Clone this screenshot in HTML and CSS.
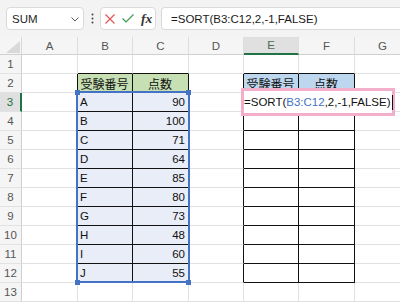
FILE: index.html
```html
<!DOCTYPE html>
<html lang="ja">
<head>
<meta charset="utf-8">
<link rel="stylesheet" href="styles.css">
</head>
<body>
<div class="app">
  <div class="toolbar">
    <div class="namebox">
      <span>SUM</span>
      <svg class="chev" width="8" height="5" viewBox="0 0 8 5"><path d="M0.5 0.5 L4 4 L7.5 0.5" fill="none" stroke="#555" stroke-width="1"/></svg>
    </div>
    <div class="dots">
      <svg width="3" height="11" viewBox="0 0 3 11"><circle cx="1.5" cy="1.5" r="1" fill="#444"/><circle cx="1.5" cy="5.5" r="1" fill="#444"/><circle cx="1.5" cy="9.5" r="1" fill="#444"/></svg>
    </div>
    <div class="fxbox">
      <svg class="ic-x" width="10" height="10" viewBox="0 0 10 10"><path d="M0.5 0.5 L9.5 9.5 M9.5 0.5 L0.5 9.5" stroke="#e0555a" stroke-width="1.2" fill="none"/></svg>
      <svg class="ic-ok" width="12" height="9" viewBox="0 0 12 9"><path d="M0.5 4.5 L4 8 L11.5 0.5" stroke="#3a9a55" stroke-width="1.2" fill="none"/></svg>
      <span class="fx">fx</span>
    </div>
    <div class="formula">=SORT(B3:C12,2,-1,FALSE)</div>
  </div>

  <div class="sheet">
    <div class="grid">
      <!-- header -->
      <div class="corner"></div>
      <div class="ch">A</div><div class="ch">B</div><div class="ch">C</div><div class="ch">D</div><div class="ch sel">E</div><div class="ch">F</div><div class="ch">G</div>
      <!-- row 1 -->
      <div class="rh">1</div>
      <div class="c"></div><div class="c bb"></div><div class="c bb"></div><div class="c"></div><div class="c bb"></div><div class="c bb"></div><div class="c"></div>
      <!-- row 2 -->
      <div class="rh">2</div>
      <div class="c rb"></div><div class="c g rb bb ctr">受験番号</div><div class="c g rb bb ctr">点数</div><div class="c rb"></div><div class="c bl rb bb ctr">受験番号</div><div class="c bl rb bb ctr">点数</div><div class="c"></div>
      <!-- row 3 -->
      <div class="rh sel">3</div>
      <div class="c rb"></div><div class="c d rb bb">A</div><div class="c d rb bb num">90</div><div class="c rb"></div><div class="c rb bb"></div><div class="c rb bb"></div><div class="c"></div>
      <!-- row 4 -->
      <div class="rh">4</div>
      <div class="c rb"></div><div class="c d rb bb">B</div><div class="c d rb bb num">100</div><div class="c rb"></div><div class="c rb bb"></div><div class="c rb bb"></div><div class="c"></div>
      <!-- row 5 -->
      <div class="rh">5</div>
      <div class="c rb"></div><div class="c d rb bb">C</div><div class="c d rb bb num">71</div><div class="c rb"></div><div class="c rb bb"></div><div class="c rb bb"></div><div class="c"></div>
      <!-- row 6 -->
      <div class="rh">6</div>
      <div class="c rb"></div><div class="c d rb bb">D</div><div class="c d rb bb num">64</div><div class="c rb"></div><div class="c rb bb"></div><div class="c rb bb"></div><div class="c"></div>
      <!-- row 7 -->
      <div class="rh">7</div>
      <div class="c rb"></div><div class="c d rb bb">E</div><div class="c d rb bb num">85</div><div class="c rb"></div><div class="c rb bb"></div><div class="c rb bb"></div><div class="c"></div>
      <!-- row 8 -->
      <div class="rh">8</div>
      <div class="c rb"></div><div class="c d rb bb">F</div><div class="c d rb bb num">80</div><div class="c rb"></div><div class="c rb bb"></div><div class="c rb bb"></div><div class="c"></div>
      <!-- row 9 -->
      <div class="rh">9</div>
      <div class="c rb"></div><div class="c d rb bb">G</div><div class="c d rb bb num">73</div><div class="c rb"></div><div class="c rb bb"></div><div class="c rb bb"></div><div class="c"></div>
      <!-- row 10 -->
      <div class="rh">10</div>
      <div class="c rb"></div><div class="c d rb bb">H</div><div class="c d rb bb num">48</div><div class="c rb"></div><div class="c rb bb"></div><div class="c rb bb"></div><div class="c"></div>
      <!-- row 11 -->
      <div class="rh">11</div>
      <div class="c rb"></div><div class="c d rb bb">I</div><div class="c d rb bb num">60</div><div class="c rb"></div><div class="c rb bb"></div><div class="c rb bb"></div><div class="c"></div>
      <!-- row 12 -->
      <div class="rh">12</div>
      <div class="c rb"></div><div class="c d rb bb">J</div><div class="c d rb bb num">55</div><div class="c rb"></div><div class="c rb bb"></div><div class="c rb bb"></div><div class="c"></div>
      <!-- row 13 -->
      <div class="rh">13</div>
      <div class="c"></div><div class="c"></div><div class="c"></div><div class="c"></div><div class="c"></div><div class="c"></div><div class="c"></div>
    </div>

    <div class="refbox"></div>
    <div class="handle h-tl"></div>
    <div class="handle h-tr"></div>
    <div class="handle h-bl"></div>
    <div class="handle h-br"></div>

    <div class="editor"><span>=SORT(</span><span class="ref">B3:C12</span><span>,2,-1,FALSE)</span><span class="caret"></span></div>
  </div>
</div>
</body>
</html>
```
FILE: styles.css
```css
body {
  margin: 0;
  background: #fff;
}

.app {
  width: 400px;
  height: 303px;
  overflow: hidden;
  position: relative;
  background: #fff;
  font-family: "Liberation Sans", Arial, "Noto Sans CJK JP", sans-serif;
}

/* ---------- formula toolbar ---------- */
.toolbar {
  height: 37px;
  box-sizing: border-box;
  display: flex;
  align-items: center;
  padding-left: 6px;
  background: #f3f3f3;
}

.namebox {
  width: 78px;
  height: 23px;
  box-sizing: border-box;
  background: #fff;
  border: 1px solid #dadada;
  border-radius: 4px;
  display: flex;
  align-items: center;
  justify-content: space-between;
  padding: 0 4px 0 5px;
  font-size: 11.5px;
  color: #262626;
}

.chev {
  margin-top: 1px;
}

.dots {
  width: 16px;
  display: flex;
  justify-content: center;
}

.fxbox {
  width: 56px;
  height: 23px;
  box-sizing: border-box;
  background: #fff;
  border: 1px solid #dadada;
  border-radius: 4px;
  display: flex;
  align-items: center;
  padding-left: 4px;
}

.ic-x {
  margin-right: 7px;
}

.ic-ok {
  margin-right: 7px;
}

.fx {
  font-family: "Liberation Serif", "DejaVu Serif", serif;
  font-style: italic;
  font-weight: bold;
  font-size: 13.5px;
  color: #333;
}

.formula {
  flex: 1;
  margin-left: 5px;
  height: 23px;
  box-sizing: border-box;
  background: #fff;
  border: 1px solid #dadada;
  border-right: none;
  border-radius: 4px 0 0 4px;
  display: flex;
  align-items: center;
  padding-left: 9px;
  font-size: 11.5px;
  color: #1a1a1a;
  white-space: nowrap;
}

/* ---------- sheet ---------- */
.sheet {
  position: relative;
}

.grid {
  display: grid;
  grid-template-columns: 22px 56px 55px 56px 55px 55px 56px 56px;
  grid-template-rows: 18px repeat(13, 19px);
  width: 411px;
}

.grid > div {
  box-sizing: border-box;
  display: flex;
  align-items: center;
  white-space: nowrap;
  overflow: hidden;
}

.corner {
  position: relative;
  background: #f5f5f5;
  border-right: 1px solid #d8d8d8;
  border-bottom: 1px solid #d0d0d0;
}

.corner::after {
  content: "";
  position: absolute;
  right: 1px;
  bottom: 1px;
  width: 0;
  height: 0;
  border-left: 14px solid transparent;
  border-bottom: 12px solid #d9d9d9;
}

.ch {
  justify-content: center;
  background: #f5f5f5;
  border-right: 1px solid #dedede;
  border-bottom: 1px solid #d0d0d0;
  font-size: 11.5px;
  color: #555;
}

.ch.sel {
  background: #dfe0df;
  border-bottom: 2px solid #217346;
  color: #4d6b58;
}

.rh {
  justify-content: center;
  background: #f5f5f5;
  border-right: 1px solid #d0d0d0;
  border-bottom: 1px solid #e2e2e2;
  font-size: 11.5px;
  color: #555;
}

.rh.sel {
  background: #dfe0df;
  border-right: 2px solid #217346;
  color: #217346;
}

.c {
  border-right: 1px solid #e1e1e1;
  border-bottom: 1px solid #e1e1e1;
  padding: 0 3px 0 2px;
  font-size: 11.5px;
  color: #111;
}

.c.rb {
  border-right-color: #111;
}

.c.bb {
  border-bottom-color: #111;
}

.c.g {
  background: #c6e0b4;
}

.c.bl {
  background: #bdd7ee;
}

.c.d {
  background: #e8edf7;
}

.c.ctr {
  justify-content: center;
  font-size: 12px;
}

.c.num {
  justify-content: flex-end;
}

/* ---------- overlays ---------- */
.refbox {
  position: absolute;
  left: 76px;
  top: 54px;
  width: 114px;
  height: 192px;
  box-sizing: border-box;
  border: 2px solid #4472c4;
}

.handle {
  position: absolute;
  width: 5px;
  height: 5px;
  background: #4472c4;
}

.h-tl { left: 75px; top: 53px; }
.h-tr { left: 186px; top: 53px; }
.h-bl { left: 75px; top: 243px; }
.h-br { left: 186px; top: 243px; }

.editor {
  position: absolute;
  left: 241px;
  top: 51px;
  width: 154px;
  height: 28px;
  box-sizing: border-box;
  border: 3px solid #f3aec9;
  background: #fff;
  display: flex;
  align-items: center;
  padding-left: 0;
  font-size: 11.5px;
  color: #111;
  white-space: nowrap;
}

.editor .ref {
  color: #4472c4;
}

.caret {
  width: 1px;
  height: 15px;
  background: #111;
  margin-left: 1px;
}
```
